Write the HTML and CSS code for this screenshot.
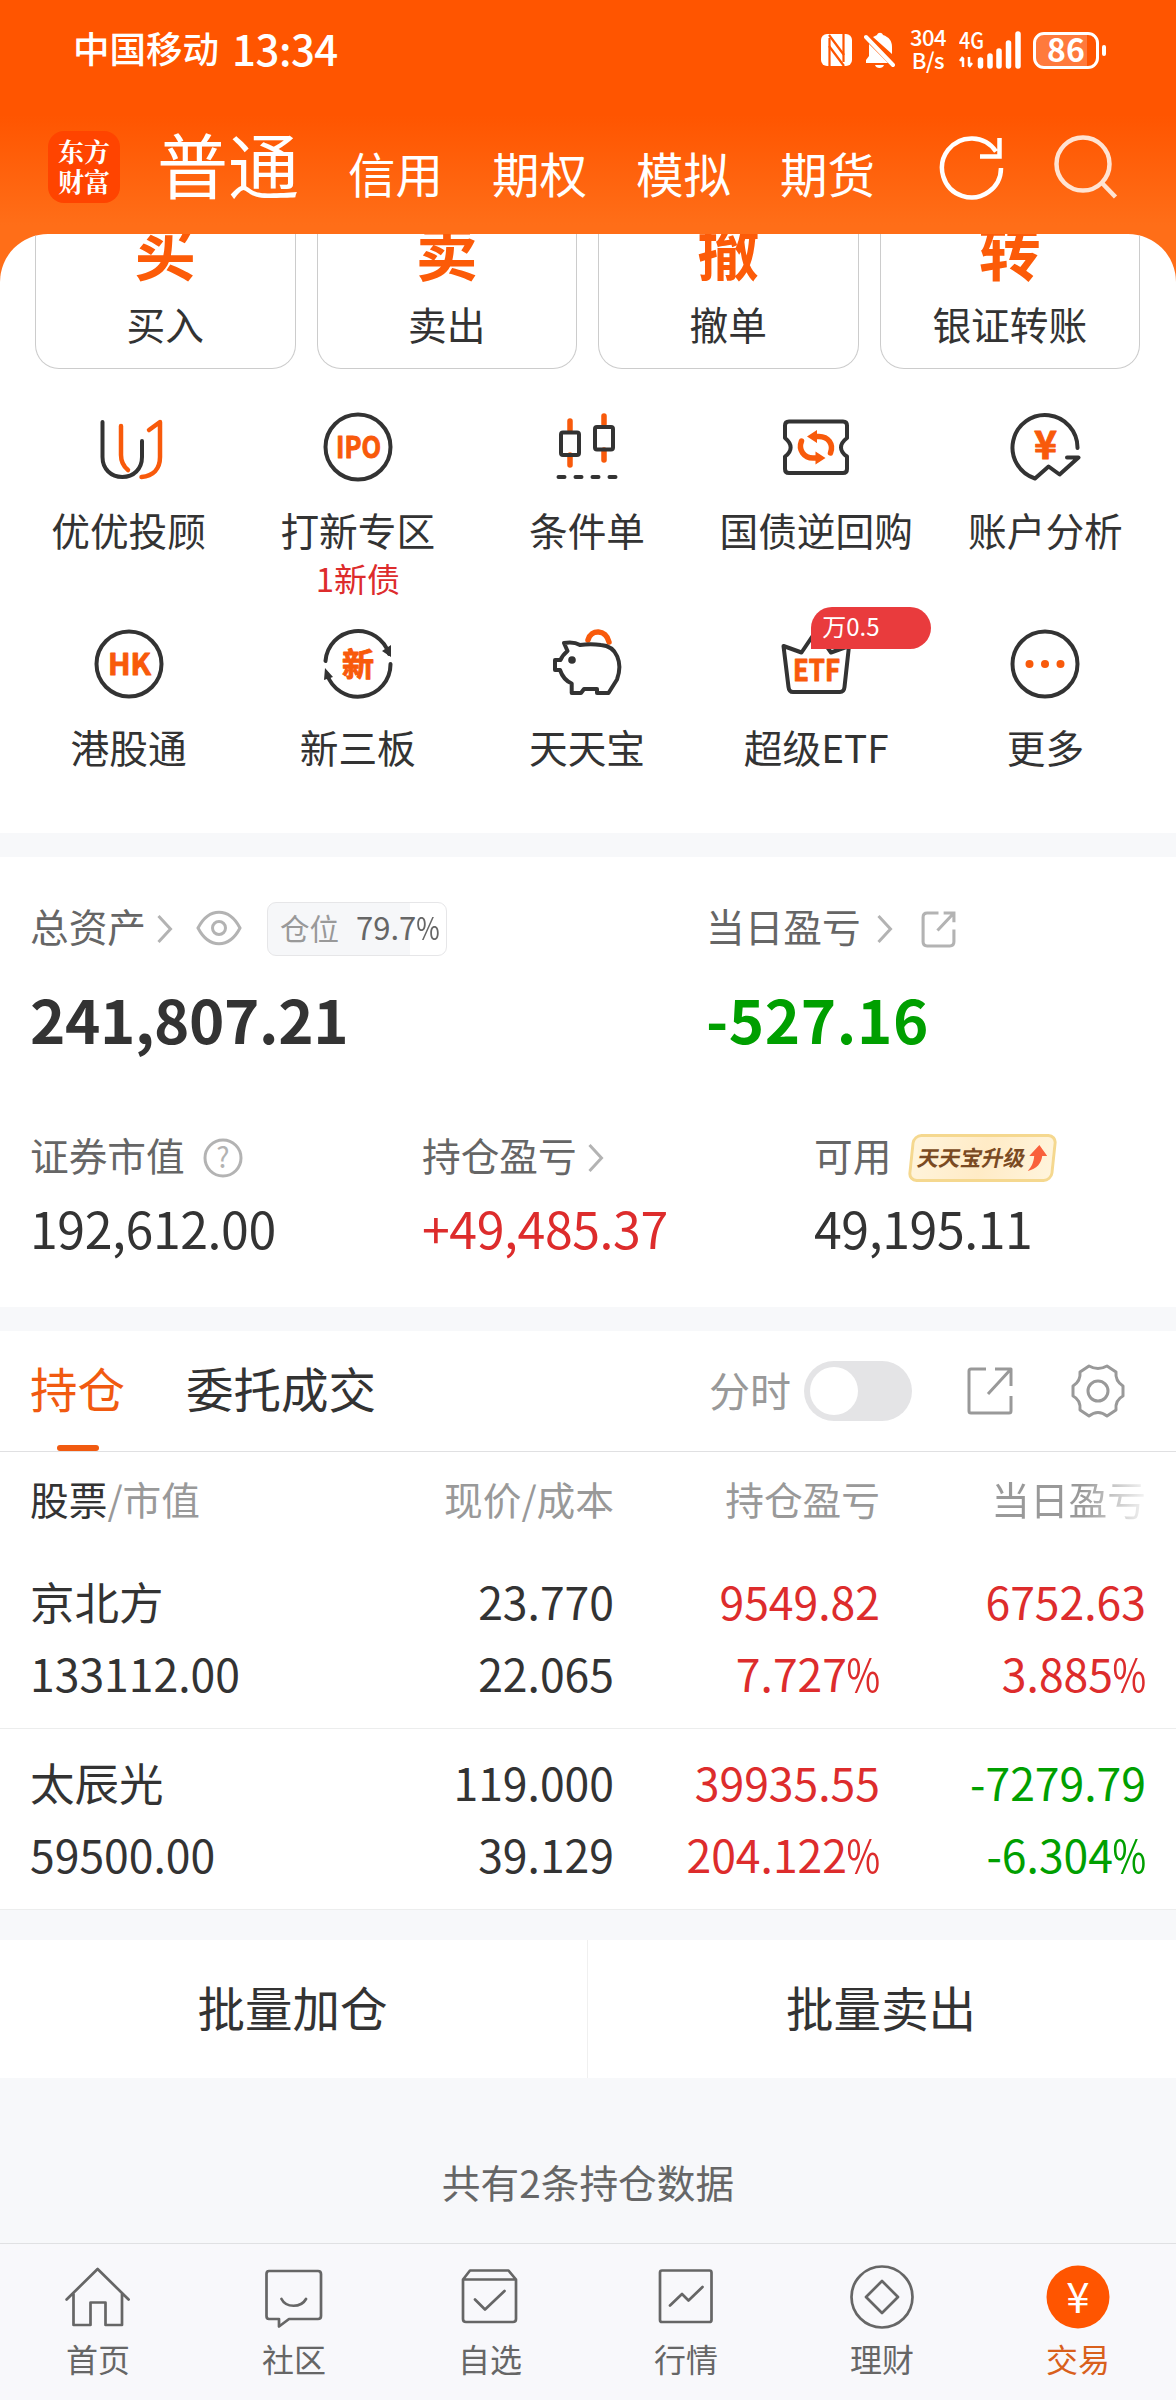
FILE: index.html
```
<!DOCTYPE html>
<html lang="zh-CN">
<head>
    <meta charset="UTF-8">
    <meta name="viewport" content="width=device-width, initial-scale=1.0">
    <title>交易</title>
    <link rel="stylesheet" href="styles.css">
</head>
<body>
    <header class="header">
        <div class="status-bar">
            <span class="carrier">中国移动</span>
            <span class="time">13:34</span>
            <div class="status-icons">
                <!-- NFC -->
                <svg class="nfc" width="31" height="34" viewBox="0 0 31 34">
                    <rect x="0" y="1" width="31" height="32" rx="6" fill="#fff"/>
                    <path d="M8.500 33V5M22.500 1v28" fill="none" stroke="#ff5500" stroke-width="2.200"/>
                    <path d="M8 2l15 20M8 13l15 20" fill="none" stroke="#ff5500" stroke-width="2.200"/>
                </svg>
                <!-- Muted bell -->
                <svg class="bell" width="31" height="36" viewBox="0 0 31 36">
                    <path d="M13 3c1-3 5-3 6 0 6 2 9 6 9 12v7L9 5zM5 12l19 19H2v-3l3-4zM11 33h9c-1 4-8 4-9 0z" fill="#fff"/>
                    <path d="M2 5l27 28" stroke="#fff" stroke-width="4" stroke-linecap="round"/>
                </svg>
                <span class="speed">304<br>B/s</span>
                <svg class="signal" width="63" height="38" viewBox="0 0 63 38">
                    <text x="0" y="18" font-size="23" font-weight="500" textLength="25" lengthAdjust="spacingAndGlyphs" fill="#fff">4G</text>
                    <path d="M4 36V27M1 30l3-4M10 26v9M13 32l-3 4" stroke="#fff" stroke-width="2.500" fill="none"/>
                    <path d="M21.500 29v6M31 25v10M40 20v15M49.500 12v23M59 3v32" stroke="#fff" stroke-width="5.500" stroke-linecap="round"/>
                </svg>
                <div class="battery">86</div>
            </div>
        </div>
        <nav class="top-nav">
            <div class="logo">东方<br>财富</div>
            <div class="account-tabs">
                <a class="account-tab active">普通</a>
                <a class="account-tab">信用</a>
                <a class="account-tab">期权</a>
                <a class="account-tab">模拟</a>
                <a class="account-tab">期货</a>
            </div>
            <svg class="refresh" width="66" height="66" viewBox="0 0 66 66" fill="none" stroke="#fff" stroke-width="4.500">
                <path d="M62 34A29.500 29.500 0 1 1 57 17.500M60.500 4v18.500H41"/>
            </svg>
            <svg class="search" width="66" height="66" viewBox="0 0 66 66" fill="none" stroke="#ffe3d2" stroke-width="4.500">
                <circle cx="30" cy="30" r="26.500"/>
                <path d="M49 49l13.500 14"/>
            </svg>
        </nav>
    </header>

    <section class="panel">
        <div class="cards">
            <div class="card"><b>买</b><span>买入</span></div>
            <div class="card"><b>卖</b><span>卖出</span></div>
            <div class="card"><b>撤</b><span>撤单</span></div>
            <div class="card"><b>转</b><span>银证转账</span></div>
        </div>
        <div class="menu">
            <div class="menu-item">
                <svg class="icon" viewBox="0 0 72 72">
                    <path class="dark" d="M9.500 11V46C9.500 58 18 66 29.300 66S49 58 49 46V30"/>
                    <path class="hot" d="M28 15V44C28 51 30 55 35 59M48.500 66C60 65 67 58 67 46V11L56 19"/>
                </svg>
                <span>优优投顾</span>
            </div>
            <div class="menu-item">
                <svg class="icon" viewBox="0 0 72 72">
                    <circle class="dark" cx="36" cy="36" r="32.500"/>
                    <text class="icon-text" x="14" y="47" font-size="30" textLength="45" lengthAdjust="spacingAndGlyphs">IPO</text>
                </svg>
                <span>打新专区</span>
                <em>1新债</em>
            </div>
            <div class="menu-item">
                <svg class="icon" viewBox="0 0 72 72">
                    <path class="hot thick" d="M19 10V19M19 44V54M53 5V13M53 39V49"/>
                    <rect class="dark" x="10" y="21.500" width="18" height="22.500" rx="2"/>
                    <rect class="dark" x="44" y="16" width="18" height="22.500" rx="2"/>
                    <path class="dark" d="M7.500 66h6M24.500 66h6M41.500 66h6M58.500 66h6"/>
                </svg>
                <span>条件单</span>
            </div>
            <div class="menu-item">
                <svg class="icon" viewBox="0 0 72 72">
                    <path class="dark" d="M9 10.500H63Q67 10.500 67 14.500V27C59 33 59 40 67 45.500V58Q67 62 63 62H9Q5 62 5 58V45.500C12.500 40 12.500 33 5 27V14.500Q5 10.500 9 10.500Z"/>
                    <path class="hot thick" d="M21.500 30C18 39 24 47 33 47H37M50.500 42C54 33 48 25.500 39 25.500H35"/>
                    <path class="hot-fill" d="M27 25.500l10-6.500v13zM45.500 47l-10 6.500v-13z"/>
                </svg>
                <span>国债逆回购</span>
            </div>
            <div class="menu-item">
                <svg class="icon" viewBox="0 0 72 72">
                    <path class="dark" d="M68.500 37A32.500 32.500 0 1 0 26 67.500L39.600 55.500L50.600 63.500L69.500 46.500H58"/>
                    <text class="icon-text" x="36.500" y="47.500" font-size="39" text-anchor="middle">¥</text>
                </svg>
                <span>账户分析</span>
            </div>
            <div class="menu-item">
                <svg class="icon" viewBox="0 0 72 72">
                    <circle class="dark" cx="36" cy="36" r="32.500"/>
                    <text class="icon-text" x="15" y="47" font-size="30" textLength="43" lengthAdjust="spacingAndGlyphs">HK</text>
                </svg>
                <span>港股通</span>
            </div>
            <div class="menu-item">
                <svg class="icon" viewBox="0 0 72 72">
                    <path class="dark" d="M3.500 33A32.500 32.500 0 0 1 67 26M68.500 36A32.500 32.500 0 0 1 5 46"/>
                    <path d="M69 17v12l-9-6zM3 40l8 9-9 3z" fill="#333"/>
                    <text class="icon-text" x="36" y="48" font-size="32" text-anchor="middle">新</text>
                </svg>
                <span>新三板</span>
            </div>
            <div class="menu-item">
                <svg class="icon" viewBox="0 0 72 72">
                    <path class="hot thick" d="M37 12C40 1 55 1 58 14"/>
                    <path class="dark" d="M4 32V42H9C11 48 15 53 20.700 55.500V65H30L33 61H46V65H57.500L66 51.500C72 35 66 18 50 17C43 16 36 16 29 17C24 14 19 14 13 15L16.500 23C13 26 11 28 9.500 32Z"/>
                    <circle cx="21" cy="32" r="3.800" fill="#333"/>
                </svg>
                <span>天天宝</span>
            </div>
            <div class="menu-item">
                <div class="icon-wrap">
                    <svg class="icon" viewBox="0 0 72 72">
                        <path class="dark" d="M3.500 18L21.500 24.500L36 3L51 24.500L69 18L64.500 59Q64 64 60 64H13Q9 64 8.500 59Z"/>
                        <text class="icon-text" x="13" y="53" font-size="30" textLength="47" lengthAdjust="spacingAndGlyphs">ETF</text>
                    </svg>
                    <div class="badge">万0.5</div>
                </div>
                <span>超级ETF</span>
            </div>
            <div class="menu-item">
                <svg class="icon" viewBox="0 0 72 72">
                    <circle class="dark" cx="36" cy="36" r="32.500"/>
                    <g fill="#f85a0b"><circle cx="20.500" cy="36" r="4"/><circle cx="36" cy="36" r="4"/><circle cx="51.500" cy="36" r="4"/></g>
                </svg>
                <span>更多</span>
            </div>
        </div>
    </section>

    <section class="assets">
        <div class="assets-main">
            <div>
                <div class="label-row">
                    <span class="label">总资产</span>
                    <svg class="chevron" viewBox="0 0 16 30"><path d="M1.500 2l12 13-12 13"/></svg>
                    <svg class="eye" viewBox="0 0 46 36"><path d="M2 18C13-3 33-3 44 18C33 39 13 39 2 18Z"/><circle cx="23" cy="18" r="6.500"/></svg>
                    <div class="position"><span>仓位</span>79.7<i class="pct">%</i></div>
                </div>
                <div class="total">241,807.21</div>
            </div>
            <div>
                <div class="label-row">
                    <span class="label">当日盈亏</span>
                    <svg class="chevron wide" viewBox="0 0 16 30"><path d="M1.500 2l12 13-12 13"/></svg>
                    <svg class="share-small" viewBox="0 0 34 36"><path d="M17 2H6Q2 2 2 6V30Q2 34 6 34H28Q32 34 32 30V18M22 2H32V11M32 2L16 19"/></svg>
                </div>
                <div class="total today green">-527.16</div>
            </div>
        </div>
        <div class="assets-sub">
            <div>
                <div class="label-row">
                    <span class="label">证券市值</span>
                    <svg class="help" viewBox="0 0 40 40"><circle cx="20" cy="20" r="18"/><text x="20" y="30" font-size="28" text-anchor="middle">?</text></svg>
                </div>
                <div class="amount">192,612.00</div>
            </div>
            <div>
                <div class="label-row">
                    <span class="label">持仓盈亏</span>
                    <svg class="chevron" viewBox="0 0 16 30"><path d="M1.500 2l12 13-12 13"/></svg>
                </div>
                <div class="amount red">+49,485.37</div>
            </div>
            <div>
                <div class="label-row">
                    <span class="label">可用</span>
                    <div class="upgrade">
                        <span>天天宝升级</span>
                        <svg width="18" height="26" viewBox="0 0 18 26"><path d="M9 0L18 11H13C13 18 9 24 0 26C4 21 5 17 5 11H0Z" fill="#f9603c"/></svg>
                    </div>
                </div>
                <div class="amount">49,195.11</div>
            </div>
        </div>
    </section>

    <section class="holdings">
        <div class="tabs">
            <a class="tab active">持仓</a>
            <a class="tab">委托成交</a>
            <span class="switch-label">分时</span>
            <div class="switch"></div>
            <svg class="share" viewBox="0 0 46 48"><path d="M19 2H4Q2 2 2 4V44Q2 46 4 46H42Q44 46 44 44V29M28 2H44V19M44 2L21 27"/></svg>
            <svg class="gear" viewBox="0 0 54 54">
                <path d="M18 2Q27 7 36 2L45 8Q44 17 52 22V32Q44 36 45 46L36 52Q27 45 18 52L9 46Q10 36 2 32V22Q10 17 9 8Z"/>
                <circle cx="27" cy="27" r="10"/>
            </svg>
        </div>
        <div class="table-head">
            <span><b>股票</b>/市值</span>
            <span>现价/成本</span>
            <span>持仓盈亏</span>
            <span class="fade">当日盈亏</span>
        </div>
        <div class="stock">
            <div>京北方<br>133112.00</div>
            <div>23.770<br>22.065</div>
            <div class="red">9549.82<br>7.727<i class="pct">%</i></div>
            <div class="red">6752.63<br>3.885<i class="pct">%</i></div>
        </div>
        <div class="stock">
            <div>太辰光<br>59500.00</div>
            <div>119.000<br>39.129</div>
            <div class="red">39935.55<br>204.122<i class="pct">%</i></div>
            <div class="green">-7279.79<br>-6.304<i class="pct">%</i></div>
        </div>
    </section>

    <div class="batch">
        <button class="batch-btn">批量加仓</button>
        <button class="batch-btn">批量卖出</button>
    </div>
    <p class="summary">共有2条持仓数据</p>

    <footer class="tab-bar">
        <a class="tab-item">
            <svg viewBox="0 0 72 72"><path d="M4.600 38.500L35.600 8L66.600 38.500M11.500 33V64H28.500V41.500H43.500V64H60V33"/></svg>
            首页
        </a>
        <a class="tab-item">
            <svg viewBox="0 0 72 72"><path d="M11 10H60Q63 10 63 13V55Q63 58 60 58H31L21 65.500V58H11Q8.500 58 8.500 55V13Q8.500 10 11 10ZM23.500 38C28 47 43 47 48 38"/></svg>
            社区
        </a>
        <a class="tab-item">
            <svg viewBox="0 0 72 72"><path d="M9 18.500L16 9.500H54.500L62 18.500V58Q62 61 59 61H12Q9 61 9 58ZM9 18.500H62M21 38.500L31 48.500L50.500 30"/></svg>
            自选
        </a>
        <a class="tab-item">
            <svg viewBox="0 0 72 72"><rect x="10" y="9.500" width="51.500" height="51.500" rx="2"/><path d="M20 44.500L32 33L38.500 39.500L52.500 26"/></svg>
            行情
        </a>
        <a class="tab-item">
            <svg viewBox="0 0 72 72"><circle cx="36" cy="36" r="30.500"/><path d="M36 20L52 36L36 52L20 36Z"/></svg>
            理财
        </a>
        <a class="tab-item active">
            <svg viewBox="0 0 72 72"><circle cx="36" cy="36" r="31.500"/><text x="36" y="52" font-size="42" text-anchor="middle">¥</text></svg>
            交易
        </a>
    </footer>
</body>
</html>
```
FILE: styles.css
```
* {
    box-sizing: border-box;
}
body {
    width: 1176px;
    height: 2400px;
    margin: 0;
    font-family: "Noto Sans CJK SC", sans-serif;
    color: #333;
    background-color: #f7f8fa;
    display: flex;
    flex-direction: column;
}
svg {
    display: block;
    flex: none;
}
.red {
    color: #dd2c2c;
}
.green {
    color: #009f00;
}
/* Narrow percent sign */
.pct {
    display: inline-block;
    margin-left: -8px;
    font-style: normal;
    transform: scaleX(0.82);
    transform-origin: right;
}

/* Header */
.header {
    height: 290px;
    margin-bottom: -56px;
    color: #fff;
    background: linear-gradient(#ff5500 115px, #ff6e18 225px);
}
.status-bar {
    height: 100px;
    padding: 0 70px 0 73px;
    display: flex;
    align-items: center;
}
.carrier {
    font-size: 36.5px;
    font-weight: 500;
    line-height: 40px;
    margin-bottom: 5px;
}
.time {
    font-size: 42px;
    font-weight: 500;
    line-height: 44px;
    letter-spacing: -0.5px;
    margin: 0 auto 5px 13px;
}
.status-icons {
    display: flex;
    align-items: center;
}
.bell {
    margin-left: 12px;
}
.speed {
    width: 38px;
    margin: 0 12px 5px 14px;
    font-size: 22px;
    font-weight: 500;
    line-height: 23px;
    text-align: center;
    letter-spacing: -0.5px;
}
.battery {
    position: relative;
    width: 66px;
    height: 37px;
    margin: 0 7px 0 11px;
    border: 3px solid #fff;
    border-radius: 11px;
    background: linear-gradient(90deg, #ff7a3c 85%, #ff5500 85%);
    font-size: 32px;
    font-weight: 700;
    line-height: 27px;
    text-align: center;
}
.battery::after {
    content: "";
    position: absolute;
    right: -10px;
    top: 10px;
    width: 4px;
    height: 11px;
    border-radius: 2px;
    background: #fff;
}
.top-nav {
    height: 134px;
    padding: 0 57px 0 48px;
    display: flex;
    align-items: center;
}
.logo {
    width: 72px;
    height: 72px;
    padding-top: 5px;
    border-radius: 16px;
    background: #ff4400;
    font-family: "Noto Serif CJK SC", "Noto Sans CJK SC", serif;
    font-size: 26px;
    font-weight: 700;
    line-height: 30px;
    text-align: center;
}
.account-tabs {
    display: flex;
    align-items: baseline;
    margin: -10px auto 0 37px;
}
.account-tab {
    font-size: 47.5px;
    line-height: 50px;
    margin-right: 49px;
}
.account-tab.active {
    font-size: 71px;
    line-height: 71px;
}
.refresh {
    margin-right: 48px;
}

/* Shortcuts */
.panel {
    height: 599px;
    flex: none;
    background: #fff;
    border-radius: 48px 48px 0 0;
    overflow: hidden;
}
.cards {
    display: grid;
    grid-template-columns: repeat(4, 1fr);
    gap: 21px;
    padding: 0 36px 0 35px;
}
.card {
    height: 135px;
    border: 1.5px solid #ccc;
    border-top: none;
    border-radius: 0 0 24px 24px;
    display: flex;
    flex-direction: column;
    align-items: center;
}
.card b {
    margin-top: -16px;
    font-size: 62px;
    line-height: 62px;
    color: #fc5b08;
}
.card span {
    margin-top: 23px;
    font-size: 38.7px;
    line-height: 40px;
}
.menu {
    display: grid;
    grid-template-columns: repeat(5, 1fr);
    grid-template-rows: 217px 205px;
    padding: 42px 16px 0 14px;
}
.menu-item {
    display: flex;
    flex-direction: column;
    align-items: center;
    font-size: 38.7px;
    line-height: 40px;
}
.menu-item span {
    margin-top: 26px;
}
.menu-item em {
    margin-top: 9px;
    font-size: 33px;
    font-style: normal;
    color: #dd2c2c;
}
.icon {
    width: 72px;
    height: 72px;
}
.icon-wrap {
    position: relative;
}
.dark, .hot {
    fill: none;
    stroke: #333;
    stroke-width: 4;
    stroke-linecap: round;
    stroke-linejoin: round;
}
.hot {
    stroke: #f85a0b;
    stroke-width: 4.5;
}
.hot.thick {
    stroke-width: 5.5;
}
.hot-fill, .icon-text {
    fill: #f85a0b;
}
.icon-text {
    font-weight: 700;
    stroke: #f85a0b;
    stroke-width: 1;
    stroke-linejoin: round;
}
.badge {
    position: absolute;
    left: 31px;
    top: -21px;
    width: 120px;
    height: 42px;
    padding-left: 11px;
    border-radius: 21px 21px 21px 0;
    background: #e93b3d;
    color: #fff;
    font-size: 24px;
    line-height: 38px;
}

/* Assets */
.assets {
    flex: none;
    height: 450px;
    margin-top: 24px;
    padding: 45px 0 0 30px;
    background: #fff;
}
.assets-main {
    display: grid;
    grid-template-columns: 676px 1fr;
}
.assets-main .label-row {
    height: 54px;
}
.assets-sub {
    display: grid;
    grid-template-columns: repeat(3, 392px);
    margin-top: 81px;
}
.label-row {
    height: 48px;
    display: flex;
    align-items: center;
}
.label {
    padding-bottom: 8px;
    font-size: 38.7px;
    line-height: 40px;
    color: #666;
}
.label-row svg {
    fill: none;
    stroke: #b3b3b3;
    stroke-width: 3;
}
.chevron {
    width: 16px;
    height: 30px;
    margin-left: 11px;
}
.chevron.wide {
    margin-left: 16px;
}
.eye {
    width: 46px;
    height: 36px;
    margin: -3px 0 0 23px;
}
.position {
    width: 180px;
    height: 54px;
    margin-left: 25px;
    padding-left: 12px;
    border: 1.5px solid #e6e6e8;
    border-radius: 9px;
    background: linear-gradient(90deg, #f6f7f9 80%, #fff 80%);
    font-size: 31px;
    line-height: 47px;
    white-space: nowrap;
    color: #666;
}
.position span {
    margin-right: 17px;
    font-size: 29.5px;
    color: #999;
}
.position .pct {
    margin-left: -5px;
}
.share-small {
    width: 35px;
    height: 37px;
    margin-left: 28px;
}
.total {
    margin-top: 27px;
    font-size: 60px;
    font-weight: 700;
    line-height: 70px;
    letter-spacing: -0.4px;
}
.total.today {
    letter-spacing: 0.6px;
}
.help {
    width: 40px;
    height: 40px;
    margin-left: 18px;
}
.help text {
    fill: #b3b3b3;
    stroke: none;
}
.upgrade {
    width: 145px;
    height: 48px;
    margin-left: 19px;
    border: 3px solid #f5d88f;
    border-radius: 9px;
    background: linear-gradient(100deg, #fff4dc, #ffebc6 50%, #fff4dc);
    transform: skewX(-6deg);
    display: flex;
    align-items: center;
    justify-content: center;
    gap: 4px;
}
.upgrade span {
    padding-bottom: 3px;
    font-size: 21.5px;
    font-weight: 700;
    line-height: 24px;
    color: #7a4a22;
    transform: skewX(-6deg);
}
.upgrade svg {
    stroke: none;
}
.amount {
    margin-top: 15px;
    font-size: 50px;
    line-height: 60px;
    letter-spacing: -0.4px;
}

/* Holdings */
.holdings {
    flex: none;
    margin-top: 24px;
    background: #fff;
}
.tabs {
    height: 121px;
    padding: 0 51px 0 30px;
    border-bottom: 1.5px solid #e0e0e2;
    display: flex;
    align-items: center;
}
.tab {
    position: relative;
    height: 120px;
    margin-right: 61px;
    font-size: 47.5px;
    line-height: 114px;
}
.tab.active {
    color: #f15a10;
}
.tab.active::after {
    content: "";
    position: absolute;
    left: 27px;
    bottom: 0;
    width: 42px;
    height: 6px;
    border-radius: 3px;
    background: #f15a10;
}
.switch-label {
    margin: 0 13px 5px auto;
    font-size: 41px;
    line-height: 42px;
    color: #999;
}
.switch {
    width: 108px;
    height: 60px;
    padding: 6px;
    border-radius: 30px;
    background: #e4e4e6;
}
.switch::before {
    content: "";
    display: block;
    width: 48px;
    height: 48px;
    border-radius: 50%;
    background: #fff;
}
.share, .gear {
    fill: none;
    stroke: #999;
    stroke-width: 3;
    stroke-linejoin: round;
}
.share {
    width: 46px;
    height: 48px;
    margin: 0 58px 0 55px;
}
.gear {
    width: 54px;
    height: 54px;
}
.table-head, .stock {
    display: grid;
    grid-template-columns: 300px 284px 266px 266px;
    padding: 0 30px;
    text-align: right;
}
.table-head {
    height: 96px;
    font-size: 38.7px;
    line-height: 92px;
    color: #999;
}
.table-head b {
    font-weight: 400;
    color: #333;
}
.table-head :first-child, .stock :first-child {
    text-align: left;
}
.fade {
    background: linear-gradient(90deg, #999 76%, #f5f5f5 100%);
    -webkit-background-clip: text;
    background-clip: text;
    color: transparent;
}
.stock {
    height: 181px;
    padding-top: 17px;
    border-bottom: 1.5px solid #eceded;
    font-size: 44.5px;
    line-height: 72px;
}

/* Batch actions */
.batch {
    flex: none;
    display: flex;
    height: 138px;
    margin-top: 30px;
    background: #fff;
}
.batch-btn {
    width: 588px;
    padding: 0 2px 6px 0;
    border: none;
    background: none;
    font: 47.5px "Noto Sans CJK SC", sans-serif;
    color: #333;
}
.batch-btn:first-child {
    border-right: 1px solid #f0f0f0;
}
.summary {
    margin: 83px 0 0;
    font-size: 38.7px;
    line-height: 40px;
    text-align: center;
    color: #666;
}

/* Bottom bar */
.tab-bar {
    height: 157px;
    margin-top: auto;
    padding-top: 17px;
    border-top: 1.5px solid #e0e1e3;
    background: #f8f8fb;
    display: flex;
}
.tab-item {
    flex: 1;
    display: flex;
    flex-direction: column;
    align-items: center;
    gap: 5px;
    font-size: 32px;
    line-height: 40px;
    color: #666;
}
.tab-item svg {
    width: 72px;
    height: 72px;
    fill: none;
    stroke: #666;
    stroke-width: 2.7;
    stroke-linecap: round;
    stroke-linejoin: round;
}
.tab-item.active {
    color: #d9601c;
}
.tab-item.active circle {
    fill: #ff5500;
    stroke: none;
}
.tab-item.active text {
    fill: #fff;
    stroke: none;
}
```
